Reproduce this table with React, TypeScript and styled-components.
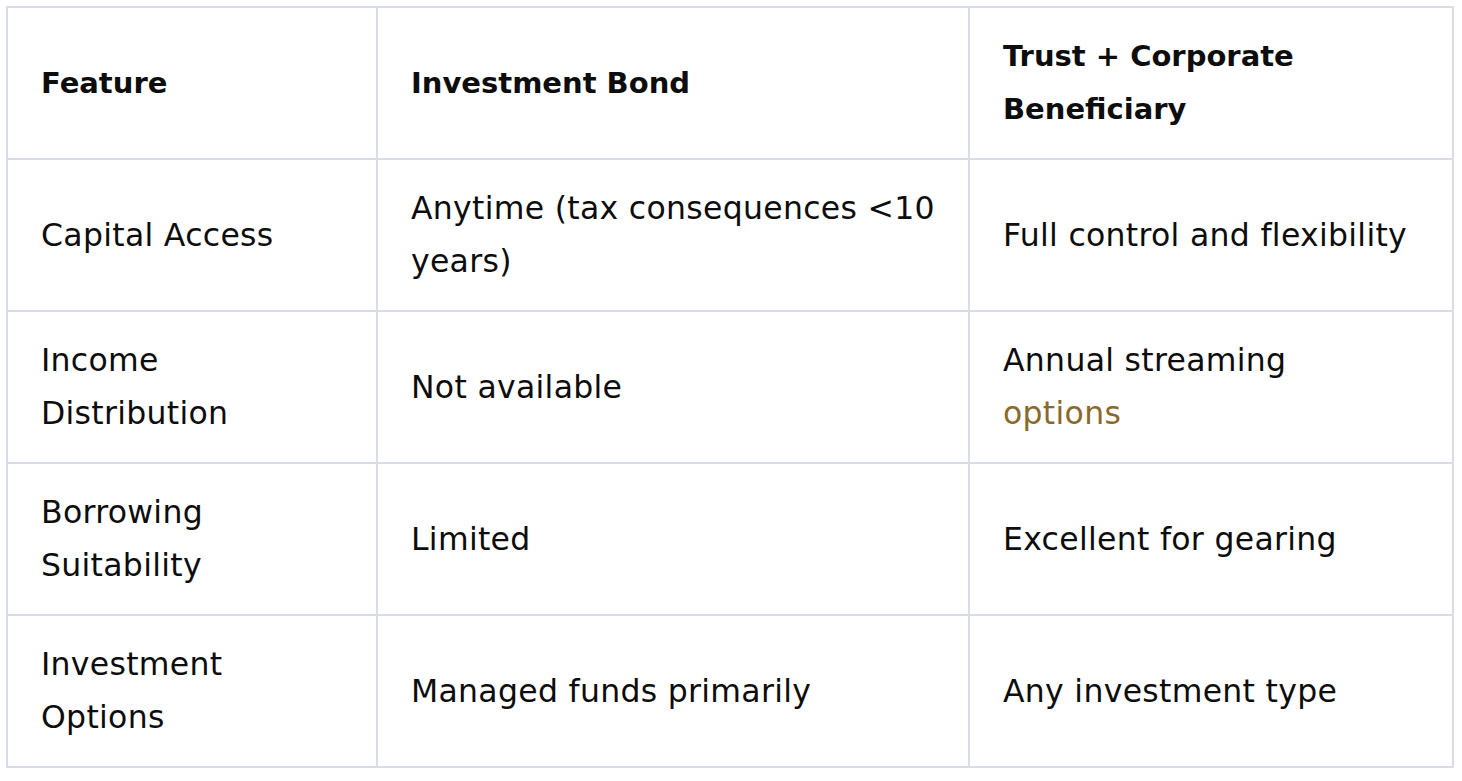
import React from "react";
import styled, { createGlobalStyle } from "styled-components";

const Global = createGlobalStyle`
  html, body { margin: 0; padding: 0; background: #ffffff; }
  body { font-family: "DejaVu Sans", "Liberation Sans", sans-serif; }
`;

const Page = styled.div`
  padding: 6px 9px 0 6px;
`;

const Table = styled.table`
  width: 1446px;
  border-collapse: collapse;
  table-layout: fixed;
  border: 2px solid #d9dce7;
`;

const Col = styled.col<{ $w: number }>`
  width: ${(p) => p.$w}px;
`;

const HeadCell = styled.th`
  border: 2px solid #d9dce7;
  padding: 22px 41px 22px 33px;
  vertical-align: middle;
  text-align: left;
  font-size: 29px;
  line-height: 53px;
  font-weight: 700;
  color: #0d0d0d;
`;

const Cell = styled.td`
  border: 2px solid #d9dce7;
  padding: 22px 33px 22px 33px;
  vertical-align: middle;
  font-size: 31.5px;
  letter-spacing: 0.3px;
  line-height: 53px;
  font-weight: 400;
  color: #0d0d0d;

  &:nth-child(2) {
    padding-right: 16px;
  }
  &:nth-child(3) {
    padding-right: 41px;
  }
`;

const Accent = styled.span`
  color: #8a6a2c;
`;

const rows: [React.ReactNode, React.ReactNode, React.ReactNode][] = [
  ["Capital Access", "Anytime (tax consequences <10 years)", "Full control and flexibility"],
  ["Income Distribution", "Not available", <>Annual streaming <Accent>options</Accent></>],
  ["Borrowing Suitability", "Limited", "Excellent for gearing"],
  ["Investment Options", "Managed funds primarily", "Any investment type"],
];

export default function App() {
  return (
    <Page>
      <Global />
      <Table>
        <colgroup>
          <Col $w={370} />
          <Col $w={592} />
          <Col $w={484} />
        </colgroup>
        <thead>
          <tr>
            <HeadCell>Feature</HeadCell>
            <HeadCell>Investment Bond</HeadCell>
            <HeadCell>Trust + Corporate Beneficiary</HeadCell>
          </tr>
        </thead>
        <tbody>
          {rows.map((r, i) => (
            <tr key={i}>
              <Cell>{r[0]}</Cell>
              <Cell>{r[1]}</Cell>
              <Cell>{r[2]}</Cell>
            </tr>
          ))}
        </tbody>
      </Table>
    </Page>
  );
}
